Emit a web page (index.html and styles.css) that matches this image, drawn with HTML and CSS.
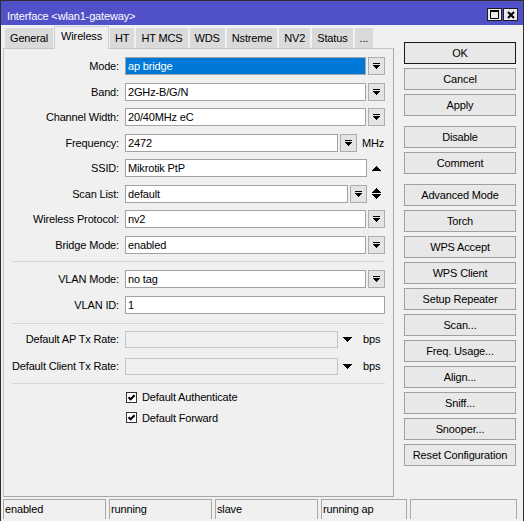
FILE: index.html
```html
<!DOCTYPE html>
<html>
<head>
<meta charset="utf-8">
<title>Interface &lt;wlan1-gateway&gt;</title>
<link rel="stylesheet" href="styles.css">
</head>
<body>
<div class="window">
  <div class="titlebar">
    <span class="title">Interface &lt;wlan1-gateway&gt;</span>
    <div class="winbtns">
      <span class="winbtn"><svg width="9" height="9" viewBox="0 0 9 9"><path d="M0 0H9V2H0Z" fill="#000"/><path d="M0.5 1.5V8.5H8.5V1.5" fill="none" stroke="#000" stroke-width="1"/></svg></span>
      <span class="winbtn"><svg width="8" height="8" viewBox="0 0 8 8"><path d="M1 1L7 7M7 1L1 7" stroke="#000" stroke-width="2" fill="none"/></svg></span>
    </div>
  </div>

  <div class="main">
    <div class="leftcol">
      <div class="tabs">
        <span class="tab">General</span>
        <span class="tab active">Wireless</span>
        <span class="tab">HT</span>
        <span class="tab">HT MCS</span>
        <span class="tab">WDS</span>
        <span class="tab">Nstreme</span>
        <span class="tab">NV2</span>
        <span class="tab">Status</span>
        <span class="tab">...</span>
      </div>
      <div class="panel">
        <div class="section s1">
          <div class="row">
            <span class="lbl">Mode:</span>
            <div class="ctl"><div class="field selected">ap bridge</div><span class="dd"><svg width="7" height="6" viewBox="0 0 7 6"><path d="M0 0H7V1H0Z M0 2H7V3H6V4H5V5H4V6H3V5H2V4H1V3H0Z" fill="#000"/></svg></span></div>
          </div>
          <div class="row">
            <span class="lbl">Band:</span>
            <div class="ctl"><div class="field">2GHz-B/G/N</div><span class="dd"><svg width="7" height="6" viewBox="0 0 7 6"><path d="M0 0H7V1H0Z M0 2H7V3H6V4H5V5H4V6H3V5H2V4H1V3H0Z" fill="#000"/></svg></span></div>
          </div>
          <div class="row">
            <span class="lbl">Channel Width:</span>
            <div class="ctl"><div class="field">20/40MHz eC</div><span class="dd"><svg width="7" height="6" viewBox="0 0 7 6"><path d="M0 0H7V1H0Z M0 2H7V3H6V4H5V5H4V6H3V5H2V4H1V3H0Z" fill="#000"/></svg></span></div>
          </div>
          <div class="row">
            <span class="lbl">Frequency:</span>
            <div class="ctl"><div class="field">2472</div><span class="dd"><svg width="7" height="6" viewBox="0 0 7 6"><path d="M0 0H7V1H0Z M0 2H7V3H6V4H5V5H4V6H3V5H2V4H1V3H0Z" fill="#000"/></svg></span><span class="unit">MHz</span></div>
          </div>
          <div class="row">
            <span class="lbl">SSID:</span>
            <div class="ctl"><div class="field">Mikrotik PtP</div><span class="icon"><svg width="9" height="5" viewBox="0 0 9 5"><path d="M4 0H5V1H6V2H7V3H8V4H9V5H0V4H1V3H2V2H3V1H4Z" fill="#000"/></svg></span></div>
          </div>
          <div class="row">
            <span class="lbl">Scan List:</span>
            <div class="ctl"><div class="field">default</div><span class="dd"><svg width="7" height="6" viewBox="0 0 7 6"><path d="M0 0H7V1H0Z M0 2H7V3H6V4H5V5H4V6H3V5H2V4H1V3H0Z" fill="#000"/></svg></span><span class="icon"><svg width="9" height="11" viewBox="0 0 9 11"><path d="M4 0H5V1H6V2H7V3H8V4H9V5H0V4H1V3H2V2H3V1H4Z" fill="#000"/><path d="M0 6H9V7H8V8H7V9H6V10H5V11H4V10H3V9H2V8H1V7H0Z" fill="#000"/></svg></span></div>
          </div>
          <div class="row">
            <span class="lbl">Wireless Protocol:</span>
            <div class="ctl"><div class="field">nv2</div><span class="dd"><svg width="7" height="6" viewBox="0 0 7 6"><path d="M0 0H7V1H0Z M0 2H7V3H6V4H5V5H4V6H3V5H2V4H1V3H0Z" fill="#000"/></svg></span></div>
          </div>
          <div class="row">
            <span class="lbl">Bridge Mode:</span>
            <div class="ctl"><div class="field">enabled</div><span class="dd"><svg width="7" height="6" viewBox="0 0 7 6"><path d="M0 0H7V1H0Z M0 2H7V3H6V4H5V5H4V6H3V5H2V4H1V3H0Z" fill="#000"/></svg></span></div>
          </div>
        </div>

        <div class="sep sep1"></div>

        <div class="section s2">
          <div class="row">
            <span class="lbl">VLAN Mode:</span>
            <div class="ctl"><div class="field">no tag</div><span class="dd"><svg width="7" height="6" viewBox="0 0 7 6"><path d="M0 0H7V1H0Z M0 2H7V3H6V4H5V5H4V6H3V5H2V4H1V3H0Z" fill="#000"/></svg></span></div>
          </div>
          <div class="row">
            <span class="lbl">VLAN ID:</span>
            <div class="ctl"><div class="field">1</div></div>
          </div>
        </div>

        <div class="sep sep2"></div>

        <div class="section s3">
          <div class="row short">
            <span class="lbl">Default AP Tx Rate:</span>
            <div class="ctl"><div class="field disabled"></div><span class="icon wide"><svg width="9" height="5" viewBox="0 0 9 5"><path d="M0 0H9V1H8V2H7V3H6V4H5V5H4V4H3V3H2V2H1V1H0Z" fill="#000"/></svg></span><span class="unit">bps</span></div>
          </div>
          <div class="row short">
            <span class="lbl">Default Client Tx Rate:</span>
            <div class="ctl"><div class="field disabled"></div><span class="icon wide"><svg width="9" height="5" viewBox="0 0 9 5"><path d="M0 0H9V1H8V2H7V3H6V4H5V5H4V4H3V3H2V2H1V1H0Z" fill="#000"/></svg></span><span class="unit">bps</span></div>
          </div>
        </div>

        <div class="sep sep3"></div>

        <div class="section s4">
          <div class="check"><span class="box"><svg width="9" height="9" viewBox="0 0 9 9"><path d="M1.5 4.2L3.6 6.3L7.6 2.2" stroke="#000" stroke-width="2" fill="none"/></svg></span><span>Default Authenticate</span></div>
          <div class="check"><span class="box"><svg width="9" height="9" viewBox="0 0 9 9"><path d="M1.5 4.2L3.6 6.3L7.6 2.2" stroke="#000" stroke-width="2" fill="none"/></svg></span><span>Default Forward</span></div>
        </div>
      </div>
    </div>

    <div class="buttons">
      <span class="btn default">OK</span>
      <span class="btn">Cancel</span>
      <span class="btn">Apply</span>
      <span class="btn group">Disable</span>
      <span class="btn">Comment</span>
      <span class="btn group">Advanced Mode</span>
      <span class="btn">Torch</span>
      <span class="btn">WPS Accept</span>
      <span class="btn">WPS Client</span>
      <span class="btn">Setup Repeater</span>
      <span class="btn">Scan...</span>
      <span class="btn">Freq. Usage...</span>
      <span class="btn">Align...</span>
      <span class="btn">Sniff...</span>
      <span class="btn">Snooper...</span>
      <span class="btn">Reset Configuration</span>
    </div>
  </div>

  <div class="statusbar">
    <span class="cell c1">enabled</span>
    <span class="cell c2">running</span>
    <span class="cell c3">slave</span>
    <span class="cell c4">running ap</span>
    <span class="cell c5"></span>
  </div>
</div>
</body>
</html>
```

FILE: styles.css
```css
* { box-sizing: border-box; }
html, body { margin: 0; padding: 0; }
body {
  background: #f0f0f0;
  font-family: "Liberation Sans", Arial, sans-serif;
  font-size: 11px;
  letter-spacing: -0.15px;
  color: #000;
}
.window {
  width: 524px;
  height: 521px;
  border: 1px solid #2e2e2e;
  border-bottom: none;
  background: #f0f0f0;
  display: flex;
  flex-direction: column;
}
.titlebar {
  height: 24px;
  flex: none;
  background: #5050c8;
  color: #fff;
  display: flex;
  align-items: center;
  justify-content: space-between;
  padding: 5px 5px 0 6px;
}
.title { line-height: 14px; }
.winbtns { display: flex; gap: 1px; margin-top: -2px; }
.winbtn {
  width: 15px;
  height: 13px;
  border: 1px solid #1e1e1e;
  background: #ebebeb;
  display: flex;
  align-items: center;
  justify-content: center;
}
.winbtn svg { display: block; }

.main {
  height: 472px;
  flex: none;
  display: flex;
}
.leftcol {
  width: 391px;
  margin-left: 2px;
  display: flex;
  flex-direction: column;
}
.tabs {
  height: 23px;
  flex: none;
  display: flex;
  align-items: flex-end;
  padding-left: 2px;
}
.tab {
  height: 20px;
  line-height: 20px;
  padding: 0 5px;
  margin-right: 2px;
  background: #dadada;
  white-space: nowrap;
}
.tab.active {
  position: relative;
  z-index: 1;
  height: 23px;
  line-height: 19px;
  margin-bottom: -1px;
  margin-right: 1px;
  margin-left: -1px;
  padding: 0 6px;
  background: #f0f0f0;
  border: 1px solid #d0d0d0;
  border-bottom: none;
}
.panel {
  flex: 1;
  border: 1px solid #c6c6c6;
  border-right-color: #a8a8a8;
  border-bottom-color: #a8a8a8;
  padding-top: 8px;
}
.section { display: flex; flex-direction: column; }
.s1 { gap: 7.5px; }
.s2 { gap: 8px; }
.s3 { gap: 10px; }
.s4 { gap: 7.5px; }
.row {
  height: 18px;
  display: flex;
  align-items: center;
}
.row.short { height: 17px; }
.lbl {
  width: 115px;
  text-align: right;
  white-space: nowrap;
  flex: none;
}
.ctl {
  width: 260px;
  margin-left: 6px;
  height: 100%;
  display: flex;
  align-items: center;
}
.field {
  flex: 1;
  height: 100%;
  border: 1px solid #a2a2a2;
  background: #fff;
  padding-left: 2px;
  line-height: 16px;
  white-space: nowrap;
  overflow: hidden;
}
.row.short .field { line-height: 15px; }
.field.selected { background: #0078d7; color: #fff; }
.field.disabled { background: #f0f0f0; border-color: #c4c4c4; }
.dd {
  width: 17px;
  height: 18px;
  flex: none;
  margin-left: 2px;
  border: 1px solid #adadad;
  background: #e4e4e4;
  display: flex;
  align-items: center;
  justify-content: center;
}
.dd svg, .icon svg, .box svg { display: block; }
.icon {
  width: 18px;
  flex: none;
  display: flex;
  justify-content: center;
  align-items: center;
}
.icon.wide { width: 19px; }
.unit {
  width: 28px;
  flex: none;
  padding-left: 6px;
}
.dd + .unit { padding-left: 5px; }

.sep {
  height: 1px;
  background: #d6d6d6;
  margin-left: 8px;
  width: 373px;
}
.sep1 { margin-top: 7px; margin-bottom: 8px; }
.sep2 { margin-top: 9px; margin-bottom: 7px; }
.sep3 { margin-top: 8px; margin-bottom: 7px; }

.s4 { padding-left: 122px; }
.check {
  height: 13px;
  display: flex;
  align-items: center;
}
.box {
  width: 11px;
  height: 11px;
  border: 1px solid #333;
  background: #fff;
  margin-right: 5px;
  display: flex;
  align-items: center;
  justify-content: center;
}

.buttons {
  width: 112px;
  margin-left: 10px;
  padding-top: 17px;
  display: flex;
  flex-direction: column;
  gap: 4px;
}
.btn {
  height: 22px;
  border: 1px solid #a0a0a0;
  background: #e8e8e8;
  display: flex;
  align-items: center;
  justify-content: center;
  white-space: nowrap;
}
.btn.default { border-color: #1a1a1a; }
.btn.group { margin-top: 6px; }

.statusbar {
  margin-top: 2px;
  height: 21px;
  padding: 0 0 1px 2px;
  display: flex;
  gap: 3px;
}
.cell {
  height: 20px;
  border: 1px solid #a8a8a8;
  border-bottom: none;
  padding-left: 1px;
  line-height: 19px;
  white-space: nowrap;
}
.c1, .c2, .c3 { width: 103px; }
.c4 { width: 86px; }
.c5 { width: 107px; }
```
